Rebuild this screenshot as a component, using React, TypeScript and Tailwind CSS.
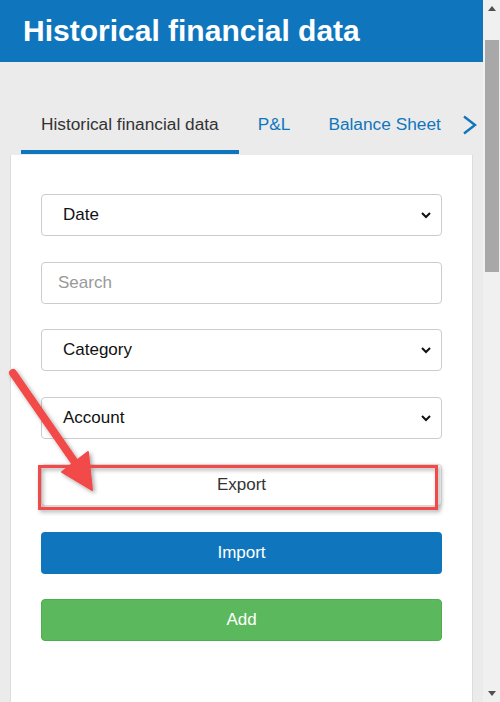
function SelectBox({ label }: { label: string }) {
  return (
    <div className="flex h-[42px] shrink-0 items-center justify-between rounded border border-[#ccc] bg-white pl-[21px] pr-[8px] text-[17px] text-[#111]">
      <span>{label}</span>
      <svg width="12" height="8" viewBox="0 0 12 8" className="mr-[1px]">
        <path d="M2 2 L6 6 L10 2" fill="none" stroke="#111" strokeWidth="2" />
      </svg>
    </div>
  );
}

function Scrollbar() {
  return (
    <div className="flex w-[17px] shrink-0 flex-col items-center bg-[#f0f0f0]">
      <div className="flex h-[17px] items-center justify-center">
        <svg width="8" height="5" viewBox="0 0 8 5">
          <path d="M0 5 L4 0 L8 5 Z" fill="#505050" />
        </svg>
      </div>
      <div className="mt-[23px] h-[232px] w-[14px] bg-[#a8a8a8]" />
      <div className="flex-1" />
      <div className="flex h-[17px] items-center justify-center">
        <svg width="8" height="5" viewBox="0 0 8 5">
          <path d="M0 0 L4 5 L8 0 Z" fill="#505050" />
        </svg>
      </div>
    </div>
  );
}

function Callout() {
  // red arrow + highlight box drawn over the Export button
  return (
    <svg
      className="pointer-events-none absolute left-0 top-0"
      width="500"
      height="702"
      viewBox="0 0 500 702"
    >
      <defs>
        <filter id="sh" x="-20%" y="-20%" width="140%" height="140%">
          <feDropShadow dx="2" dy="2" stdDeviation="2" floodColor="#000" floodOpacity="0.35" />
        </filter>
      </defs>
      <g filter="url(#sh)">
        <rect x="39.5" y="466.5" width="397" height="42" fill="none" stroke="#f24848" strokeWidth="3" />
        <line x1="13" y1="373" x2="76" y2="464" stroke="#f24848" strokeWidth="8" strokeLinecap="round" />
        <polygon points="92,490 62,472 88,452" fill="#f24848" stroke="#f24848" strokeWidth="2" strokeLinejoin="round" />
      </g>
    </svg>
  );
}

export default function App() {
  return (
    <div className="relative flex h-[702px] w-[500px] overflow-hidden bg-[#ebebeb] font-['Liberation_Sans',Arial,sans-serif]">
      <div className="flex min-w-0 flex-1 flex-col">
        <header className="flex h-[62px] shrink-0 items-center bg-[#0f76bd] pl-[23px]">
          <h1 className="whitespace-nowrap text-[30px] font-bold leading-none text-white">Historical financial data</h1>
        </header>

        <nav className="mt-[38px] flex h-[54px] shrink-0 items-stretch overflow-hidden whitespace-nowrap pl-[21px] text-[17.3px]">
          <div className="flex shrink-0 items-center border-b-4 border-[#0f76bd] px-[20px] pb-[1px] text-[#333]">
            Historical financial data
          </div>
          <div className="flex shrink-0 items-center px-[19px] pb-[5px] text-[#0f76bd]">P&amp;L</div>
          <div className="flex shrink-0 items-center px-[19px] pb-[5px] text-[#0f76bd]">Balance Sheet</div>
          <div className="flex shrink-0 items-center pb-[5px] pl-[2px] text-[#0f76bd]">
            <svg width="16" height="20" viewBox="0 0 16 20">
              <path d="M2 1.5 L13 10 L2 18.5" fill="none" stroke="#0f76bd" strokeWidth="2.4" />
            </svg>
          </div>
        </nav>

        <main className="mx-[10px] mt-px flex flex-1 flex-col gap-[25.5px] border-x border-[#ddd] bg-white px-[30px] pt-[39px]">
          <SelectBox label="Date" />
          <div className="flex h-[42px] shrink-0 items-center rounded border border-[#ccc] bg-white pl-[16px] text-[17px] text-[#999]">
            Search
          </div>
          <SelectBox label="Category" />
          <SelectBox label="Account" />
          <button className="h-[42px] shrink-0 rounded border border-[#ddd] bg-white text-[17px] text-[#333] shadow-[0_2px_4px_rgba(0,0,0,0.15)]">
            Export
          </button>
          <button className="h-[42px] shrink-0 rounded bg-[#0f76bd] text-[17px] text-white">Import</button>
          <button className="h-[42px] shrink-0 rounded border border-[#4cae4c] bg-[#5cb85c] text-[17px] text-white">Add</button>
        </main>
      </div>
      <Scrollbar />
      <Callout />
    </div>
  );
}
